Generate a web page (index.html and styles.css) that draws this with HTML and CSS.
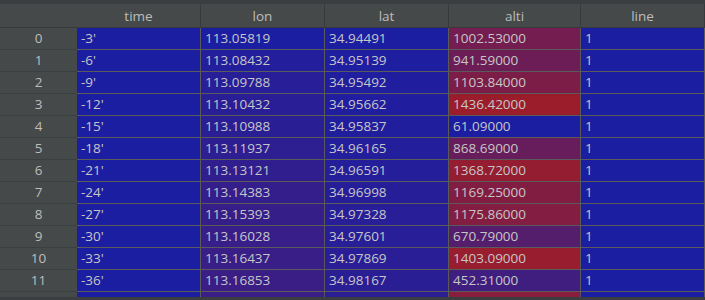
FILE: index.html
```html
<!DOCTYPE html>
<html>
<head>
<meta charset="utf-8">
<link rel="stylesheet" href="styles.css">
</head>
<body>
<div class="table">
  <div class="row head">
    <div class="hc idx"></div>
    <div class="hc">time</div>
    <div class="hc">lon</div>
    <div class="hc">lat</div>
    <div class="hc">alti</div>
    <div class="hc">line</div>
  </div>
  <div class="row"><div class="ix">0</div><div class="c">-3'</div><div class="c" style="--t:0">113.05819</div><div class="c" style="--t:0">34.94491</div><div class="c" style="--t:0.6845">1002.53000</div><div class="c">1</div></div>
  <div class="row"><div class="ix">1</div><div class="c">-6'</div><div class="c" style="--t:0.0566">113.08432</div><div class="c" style="--t:0.0194">34.95139</div><div class="c" style="--t:0.6402">941.59000</div><div class="c">1</div></div>
  <div class="row"><div class="ix">2</div><div class="c">-9'</div><div class="c" style="--t:0.0859">113.09788</div><div class="c" style="--t:0.030">34.95492</div><div class="c" style="--t:0.7582">1103.84000</div><div class="c">1</div></div>
  <div class="row"><div class="ix">3</div><div class="c">-12'</div><div class="c" style="--t:0.0999">113.10432</div><div class="c" style="--t:0.035">34.95662</div><div class="c" style="--t:1">1436.42000</div><div class="c">1</div></div>
  <div class="row"><div class="ix">4</div><div class="c">-15'</div><div class="c" style="--t:0.1119">113.10988</div><div class="c" style="--t:0.040">34.95837</div><div class="c" style="--t:0">61.09000</div><div class="c">1</div></div>
  <div class="row"><div class="ix">5</div><div class="c">-18'</div><div class="c" style="--t:0.1325">113.11937</div><div class="c" style="--t:0.050">34.96165</div><div class="c" style="--t:0.5872">868.69000</div><div class="c">1</div></div>
  <div class="row"><div class="ix">6</div><div class="c">-21'</div><div class="c" style="--t:0.1581">113.13121</div><div class="c" style="--t:0.0629">34.96591</div><div class="c" style="--t:0.9508">1368.72000</div><div class="c">1</div></div>
  <div class="row"><div class="ix">7</div><div class="c">-24'</div><div class="c" style="--t:0.1855">113.14383</div><div class="c" style="--t:0.075">34.96998</div><div class="c" style="--t:0.8057">1169.25000</div><div class="c">1</div></div>
  <div class="row"><div class="ix">8</div><div class="c">-27'</div><div class="c" style="--t:0.2073">113.15393</div><div class="c" style="--t:0.085">34.97328</div><div class="c" style="--t:0.8106">1175.86000</div><div class="c">1</div></div>
  <div class="row"><div class="ix">9</div><div class="c">-30'</div><div class="c" style="--t:0.2211">113.16028</div><div class="c" style="--t:0.0931">34.97601</div><div class="c" style="--t:0.4433">670.79000</div><div class="c">1</div></div>
  <div class="row"><div class="ix">10</div><div class="c">-33'</div><div class="c" style="--t:0.2299">113.16437</div><div class="c" style="--t:0.1011">34.97869</div><div class="c" style="--t:0.9758">1403.09000</div><div class="c">1</div></div>
  <div class="row"><div class="ix">11</div><div class="c">-36'</div><div class="c" style="--t:0.2389">113.16853</div><div class="c" style="--t:0.110">34.98167</div><div class="c" style="--t:0.2845">452.31000</div><div class="c">1</div></div>
  <div class="row"><div class="ix"></div><div class="c"></div><div class="c" style="--t:0.245"></div><div class="c" style="--t:0.115"></div><div class="c" style="--t:0.85"></div><div class="c"></div></div>
</div>
</body>
</html>
```

FILE: styles.css
```css
html, body {
  margin: 0;
  padding: 0;
}
body {
  background: #3b3e40;
  width: 705px;
  height: 300px;
  overflow: hidden;
  font-family: "Open Sans", "Noto Sans", sans-serif;
  font-size: 13.5px;
  color: #c6c6c6;
}
.table {
  margin-top: 4px;
  height: 293px;
  overflow: hidden;
  background: #45494a;
}
.row {
  display: grid;
  grid-template-columns: 77px 124px 124px 124px 132px 124px;
  height: 22px;
}
.row > div {
  box-sizing: border-box;
  height: 22px;
  border-bottom: 1px solid #5a5a5a;
  line-height: 21px;
  white-space: nowrap;
  overflow: hidden;
}
.head {
  height: 24px;
}
.head > .hc {
  height: 24px;
  border-bottom: 1px solid #37393b;
  border-right: 1px solid #37393b;
  text-align: center;
  line-height: 21px;
  padding-top: 2px;
  color: #bdbdbd;
  background: #45494a;
}
.head > .hc.idx {
  border-right: none;
}
.ix {
  text-align: center;
  color: #bdbdbd;
  background: #45494a;
  border-bottom-color: #3c3f41 !important;
}
.c {
  --t: 0;
  padding-left: 4px;
  border-right: 1px solid #5a5a5a;
  background: color-mix(in srgb, #9b1d2b calc(var(--t) * 100%), #1c1ea2);
}
```
